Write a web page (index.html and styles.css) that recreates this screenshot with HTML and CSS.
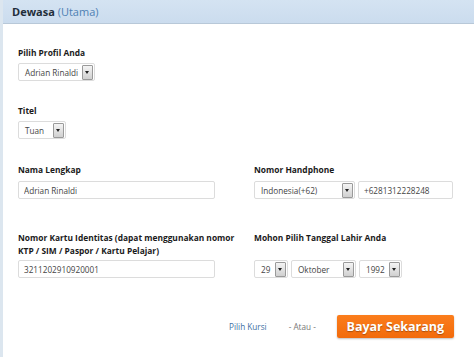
FILE: index.html
```html
<!DOCTYPE html>
<html lang="id">
<head>
  <meta charset="UTF-8" />
  <title>Data Penumpang</title>
  <link rel="stylesheet" href="styles.css">
</head>
<body>

  <div class="panel">
    <div class="panel-head">
      <b>Dewasa</b> <span class="sub">(Utama)</span>
    </div>

    <div class="panel-body">
      <!-- Profil -->
      <div class="field first">
        <div class="label">Pilih Profil Anda</div>
        <div class="select w-profil"><span class="val">Adrian Rinaldi</span><span class="arrow"></span></div>
      </div>

      <!-- Titel -->
      <div class="field">
        <div class="label">Titel</div>
        <div class="select w-titel"><span class="val">Tuan</span><span class="arrow"></span></div>
      </div>

      <!-- Nama & HP -->
      <div class="cols row-nama">
        <div class="label">Nama Lengkap</div>
        <div class="label">Nomor Handphone</div>
        <input class="input w-full" type="text" value="Adrian Rinaldi">
        <div class="inline">
          <div class="select w-negara"><span class="val">Indonesia(+62)</span><span class="arrow"></span></div>
          <input class="input w-hp" type="text" value="+6281312228248">
        </div>
      </div>

      <!-- Identitas & tanggal lahir -->
      <div class="cols row-id">
        <div class="label">Nomor Kartu Identitas (dapat menggunakan nomor KTP / SIM / Paspor / Kartu Pelajar)</div>
        <div class="label">Mohon Pilih Tanggal Lahir Anda</div>
        <input class="input w-full" type="text" value="3211202910920001">
        <div class="inline">
          <div class="select w-tgl"><span class="val">29</span><span class="arrow"></span></div>
          <div class="select w-bln"><span class="val">Oktober</span><span class="arrow"></span></div>
          <div class="select w-thn"><span class="val">1992</span><span class="arrow"></span></div>
        </div>
      </div>

      <!-- Aksi -->
      <div class="actions">
        <a class="link" href="#">Pilih Kursi</a>
        <span class="or">- Atau -</span>
        <button class="btn-pay">Bayar Sekarang</button>
      </div>
    </div>
  </div>

</body>
</html>
```

FILE: styles.css
```css
* {
  box-sizing: border-box;
}

body {
  margin: 0;
  background: #fff;
  font-family: 'Open Sans', 'DejaVu Sans', sans-serif;
  color: #222;
}

.panel {
  width: 474px;
  height: 357px;
  border-left: 3px solid #dce6ef;
}

.panel-head {
  height: 24px;
  padding: 0 0 0 9px;
  line-height: 23px;
  font-size: 11px;
  background: linear-gradient(#d4e3f2, #cbdcee);
  border-bottom: 1px solid #b8c8d8;
  color: #1f2d3a;
}

.panel-head .sub {
  color: #4d7fb3;
}

.panel-body {
  padding: 22px 0 0 15px;
}

.label {
  font-size: 8.4px;
  font-weight: bold;
  line-height: 13px;
  color: #1a1a1a;
}

.field {
  margin-top: 23px;
}

.field.first {
  margin-top: 0;
}

.field .label {
  margin-bottom: 4px;
}

/* fake select */
.select {
  display: flex;
  align-items: center;
  height: 18px;
  background: #fff;
  border: 1px solid #dcdcdc;
  border-radius: 2px;
  padding: 0 1px 0 6px;
}

.select .val {
  flex: 1;
  font-size: 8.2px;
  color: #444;
}

.select .arrow {
  position: relative;
  width: 11px;
  height: 15px;
  border: 1px solid #9a9a9a;
  border-radius: 1px;
  background: linear-gradient(#f4f4f4, #d0d0d0);
}

.select .arrow::after {
  content: '';
  position: absolute;
  left: 2px;
  top: 5px;
  border-left: 2.5px solid transparent;
  border-right: 2.5px solid transparent;
  border-top: 3px solid #222;
}

.w-profil { width: 77px; }
.w-titel { width: 48px; }
.w-negara { width: 101px; }
.w-tgl { width: 34px; }
.w-bln { width: 65px; }
.w-thn { width: 43px; }

.input {
  display: block;
  height: 18px;
  border: 1px solid #dcdcdc;
  border-radius: 2px;
  padding: 0 5px;
  font-family: inherit;
  font-size: 8.2px;
  color: #444;
  outline: none;
}

.w-full { width: 197px; }
.w-hp { width: 95px; }

.cols {
  display: grid;
  grid-template-columns: 236px 1fr;
  row-gap: 4px;
}

.row-nama {
  margin-top: 24px;
}

.row-nama .label {
  margin-bottom: 1px;
}

.row-id {
  margin-top: 32px;
  row-gap: 3px;
}

.row-id .label:first-child {
  width: 222px;
}

.inline {
  display: flex;
  gap: 3px;
}

.actions {
  display: flex;
  align-items: center;
  margin-top: 37px;
  padding-left: 211px;
}

.link {
  font-size: 8.2px;
  color: #3d6fa3;
  text-decoration: none;
}

.or {
  font-size: 8.2px;
  color: #777;
  margin-left: 22px;
}

.btn-pay {
  margin-left: 21px;
  width: 117px;
  height: 23px;
  border: none;
  border-radius: 2px;
  background: linear-gradient(#fb7d1c, #f26b0c);
  box-shadow: 0 1px 2px rgba(0, 0, 0, 0.25);
  color: #fff;
  font-family: inherit;
  font-size: 12.5px;
  font-weight: bold;
  text-shadow: 0 1px 1px rgba(0, 0, 0, 0.3);
  padding: 0;
}
```
